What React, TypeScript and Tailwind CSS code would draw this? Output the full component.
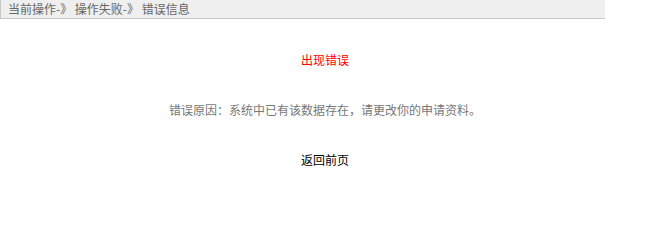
export default function App() {
  return (
    <div className="w-[650px] h-[200px] bg-white text-[12px] leading-[18px] font-['SimSun','Noto_Sans_CJK_SC',sans-serif]">
      <div className="w-[605px] h-[19px] bg-[#efefef] border-l border-b border-[#c8c8c8] pl-[7px] text-[#666666]">
        当前操作-》 操作失败-》 错误信息
      </div>
      <div className="flex flex-col items-center">
        <div className="mt-[32px] text-[#ff0000]">出现错误</div>
        <div className="mt-[32px] text-[#777777]">错误原因：系统中已有该数据存在，请更改你的申请资料。</div>
        <div className="mt-[32px] text-black">返回前页</div>
      </div>
    </div>
  );
}
